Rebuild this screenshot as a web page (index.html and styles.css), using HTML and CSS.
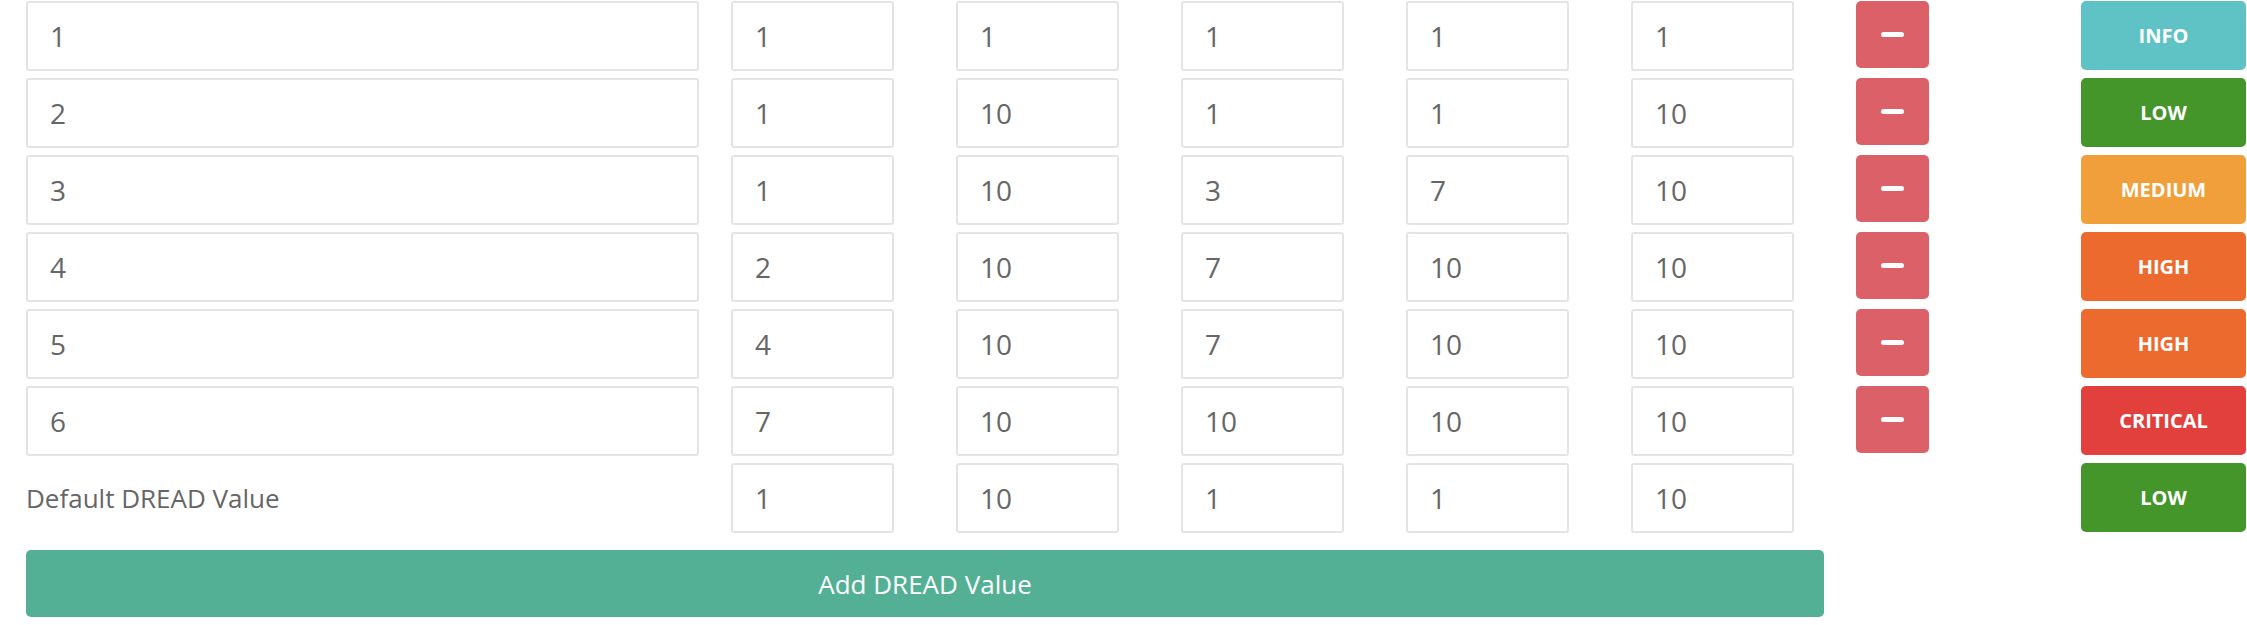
FILE: index.html
```html
<!DOCTYPE html>
<html lang="en">
<head>
    <meta charset="UTF-8">
    <meta name="viewport" content="width=device-width, initial-scale=1.0">
    <title>DREAD Values</title>
    <link rel="stylesheet" href="styles.css">
</head>
<body>
    <div class="dread-list">
        <div class="dread-row">
            <input type="text" class="name-field" value="1">
            <input type="text" class="num-field" value="1">
            <input type="text" class="num-field" value="1">
            <input type="text" class="num-field" value="1">
            <input type="text" class="num-field" value="1">
            <input type="text" class="num-field" value="1">
            <button class="remove-btn"><span class="minus"></span></button>
            <div class="badge info">INFO</div>
        </div>
        <div class="dread-row">
            <input type="text" class="name-field" value="2">
            <input type="text" class="num-field" value="1">
            <input type="text" class="num-field" value="10">
            <input type="text" class="num-field" value="1">
            <input type="text" class="num-field" value="1">
            <input type="text" class="num-field" value="10">
            <button class="remove-btn"><span class="minus"></span></button>
            <div class="badge low">LOW</div>
        </div>
        <div class="dread-row">
            <input type="text" class="name-field" value="3">
            <input type="text" class="num-field" value="1">
            <input type="text" class="num-field" value="10">
            <input type="text" class="num-field" value="3">
            <input type="text" class="num-field" value="7">
            <input type="text" class="num-field" value="10">
            <button class="remove-btn"><span class="minus"></span></button>
            <div class="badge medium">MEDIUM</div>
        </div>
        <div class="dread-row">
            <input type="text" class="name-field" value="4">
            <input type="text" class="num-field" value="2">
            <input type="text" class="num-field" value="10">
            <input type="text" class="num-field" value="7">
            <input type="text" class="num-field" value="10">
            <input type="text" class="num-field" value="10">
            <button class="remove-btn"><span class="minus"></span></button>
            <div class="badge high">HIGH</div>
        </div>
        <div class="dread-row">
            <input type="text" class="name-field" value="5">
            <input type="text" class="num-field" value="4">
            <input type="text" class="num-field" value="10">
            <input type="text" class="num-field" value="7">
            <input type="text" class="num-field" value="10">
            <input type="text" class="num-field" value="10">
            <button class="remove-btn"><span class="minus"></span></button>
            <div class="badge high">HIGH</div>
        </div>
        <div class="dread-row">
            <input type="text" class="name-field" value="6">
            <input type="text" class="num-field" value="7">
            <input type="text" class="num-field" value="10">
            <input type="text" class="num-field" value="10">
            <input type="text" class="num-field" value="10">
            <input type="text" class="num-field" value="10">
            <button class="remove-btn"><span class="minus"></span></button>
            <div class="badge critical">CRITICAL</div>
        </div>
        <div class="dread-row default-row">
            <label class="name-field default-label">Default DREAD Value</label>
            <input type="text" class="num-field" value="1">
            <input type="text" class="num-field" value="10">
            <input type="text" class="num-field" value="1">
            <input type="text" class="num-field" value="1">
            <input type="text" class="num-field" value="10">
            <div class="badge low">LOW</div>
        </div>
    </div>
    <button class="add-btn">Add DREAD Value</button>
</body>
</html>
```

FILE: styles.css
```css
body {
    margin: 0;
    padding: 1px 0 0 26px;
    background-color: white;
    font-family: "Open Sans", "Liberation Sans", sans-serif;
    color: #666;
}
.dread-list {
    display: flex;
    flex-direction: column;
    gap: 7px;
}
.dread-row {
    display: flex;
    align-items: flex-start;
    height: 70px;
}
input[type="text"] {
    box-sizing: border-box;
    height: 70px;
    padding: 0 22px;
    border: 2px solid #e4e4e4;
    border-radius: 3px;
    font-family: inherit;
    font-size: 28px;
    color: #666;
    background-color: white;
    outline: none;
}
.name-field {
    width: 673px;
    flex: none;
}
.num-field {
    width: 163px;
    margin-left: 62px;
    flex: none;
}
.name-field + .num-field {
    margin-left: 32px;
}
.default-label {
    box-sizing: border-box;
    height: 70px;
    display: flex;
    align-items: center;
    font-size: 26px;
    color: #666;
}
.remove-btn {
    width: 73px;
    height: 67px;
    margin-left: 62px;
    flex: none;
    border: none;
    border-radius: 5px;
    background-color: #dc6068;
    display: flex;
    align-items: center;
    justify-content: center;
    cursor: pointer;
}
.minus {
    display: block;
    width: 23px;
    height: 5px;
    border-radius: 3px;
    background-color: white;
}
.badge {
    box-sizing: border-box;
    width: 165px;
    height: 69px;
    margin-left: 152px;
    flex: none;
    border-radius: 5px;
    display: flex;
    align-items: center;
    justify-content: center;
    color: white;
    font-size: 20px;
    font-weight: 700;
}
.default-row .badge {
    margin-left: 287px;
}
.info { background-color: #5fc3c5; }
.low { background-color: #44962b; }
.medium { background-color: #f09f3b; }
.high { background-color: #ec6a2e; }
.critical { background-color: #e2403d; }
.add-btn {
    display: block;
    width: 1798px;
    height: 67px;
    margin-top: 17px;
    border: none;
    border-radius: 5px;
    background-color: #53b095;
    color: white;
    font-family: inherit;
    font-size: 26px;
    cursor: pointer;
}
```
